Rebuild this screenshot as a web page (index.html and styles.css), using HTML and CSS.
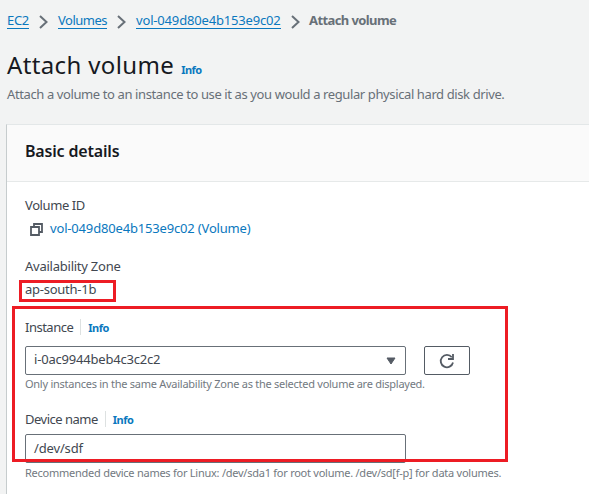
FILE: index.html
```html
<!DOCTYPE html>
<html lang="en">
<head>
<meta charset="utf-8">
<title>Attach volume</title>
<link rel="stylesheet" href="styles.css">
</head>
<body>
<nav class="breadcrumbs">
  <a class="crumb crumb-root" href="#">EC2</a>
  <svg class="chevron" viewBox="0 0 9 14"><path d="M1 1l6.500 6L1 13"/></svg>
  <a class="crumb crumb-list" href="#">Volumes</a>
  <svg class="chevron" viewBox="0 0 9 14"><path d="M1 1l6.500 6L1 13"/></svg>
  <a class="crumb crumb-volume" href="#">vol-049d80e4b153e9c02</a>
  <svg class="chevron" viewBox="0 0 9 14"><path d="M1 1l6.500 6L1 13"/></svg>
  <span class="crumb-current">Attach volume</span>
</nav>
<header class="page-header">
  <div class="title-row"><h1>Attach volume</h1><a class="info" href="#">Info</a></div>
  <p class="description">Attach a volume to an instance to use it as you would a regular physical hard disk drive.</p>
</header>
<main class="card">
  <div class="card-header"><h2>Basic details</h2></div>
  <div class="card-body">
    <section class="detail">
      <div class="label label-id">Volume ID</div>
      <div class="value">
        <svg class="copy" viewBox="0 0 13 13"><path d="M1 4h8v8H1zM4 4V1h8v8H9"/></svg>
        <a class="volume-link" href="#">vol-049d80e4b153e9c02 (Volume)</a>
      </div>
    </section>
    <section class="detail">
      <div class="label label-zone">Availability Zone</div>
      <div class="zone">ap-south-1b</div>
    </section>
    <section class="field">
      <div class="field-label"><label class="label">Instance</label><a class="info info-divided" href="#">Info</a></div>
      <div class="control-row">
        <div class="control select"><span class="selected">i-0ac9944beb4c3c2c2</span><svg class="caret" viewBox="0 0 10 8"><path d="M1 1h8L5 7z"/></svg></div>
        <button class="refresh" aria-label="Refresh"><svg viewBox="0 0 16 16"><path d="M14 9.500A6.200 6.200 0 1 1 12.800 4.200"/><path d="M14 1v5H9"/></svg></button>
      </div>
      <p class="hint hint-instance">Only instances in the same Availability Zone as the selected volume are displayed.</p>
    </section>
    <section class="field">
      <div class="field-label field-label-compact"><label class="label">Device name</label><a class="info info-divided" href="#">Info</a></div>
      <div class="control input">/dev/sdf</div>
      <p class="hint hint-device">Recommended device names for Linux: /dev/sda1 for root volume. /dev/sd[f-p] for data volumes.</p>
    </section>
  </div>
</main>
<div class="mark mark-zone"></div>
<div class="mark mark-fields"></div>
</body>
</html>
```
FILE: styles.css
```css
* { box-sizing: border-box; }
html, body { height: 100%; }
body {
  margin: 0;
  overflow: hidden;
  background: #f2f3f3;
  color: #414750;
  font: 13px/20px "Noto Sans", sans-serif;
}
a { color: #0a78be; text-decoration: none; }
h1, h2, p { margin: 0; }

.breadcrumbs { display: flex; align-items: flex-start; padding: 10px 0 0 7px; height: 48px; white-space: nowrap; }
.crumb { height: 19px; border-bottom: 1px solid #0a78be; }
.crumb-root { width: 22px; letter-spacing: -.3px; }
.crumb-list { width: 49px; letter-spacing: -.5px; }
.crumb-volume { width: 145px; letter-spacing: -.17px; }
.chevron { width: 9px; height: 14px; margin: 5px 10px 0; fill: none; stroke: #687078; stroke-width: 2; }
.crumb-current { margin-left: -1px; color: #687078; font-weight: 700; letter-spacing: -.6px; }

.page-header { height: 76px; padding-left: 7px; }
.title-row { display: flex; align-items: baseline; height: 36px; }
h1 { color: #16191f; font-size: 24px; font-weight: 400; line-height: 34px; letter-spacing: .36px; }
.info { font-size: 11px; font-weight: 700; letter-spacing: -.5px; }
.title-row .info { margin-left: 7px; }
.description { color: #687078; letter-spacing: -.39px; white-space: nowrap; }

.card { height: 371px; margin-left: 6px; border-top: 1px solid #e3e7e8; border-left: 1px solid #c6cccd; background: #fff; }
.card-header { height: 57px; padding: 16px 18px; border-bottom: 1px solid #e6e9e9; background: #fafafa; }
h2 { color: #16191f; font-size: 16px; font-weight: 600; line-height: 21px; letter-spacing: -.18px; }
.card-body { padding: 13px 18px; }
.detail { height: 61px; }
.label { letter-spacing: -.5px; }
.label-id { letter-spacing: -.4px; }
.label-zone { letter-spacing: -.24px; }
.value { display: flex; align-items: center; height: 26px; padding-left: 5px; }
.copy { width: 13px; height: 13px; margin: 3px 7px 0 0; fill: none; stroke: #545b64; stroke-width: 1.8; }
.volume-link { letter-spacing: -.17px; }
.zone { padding-top: 3px; letter-spacing: -.25px; }

.field { height: 92px; }
.field-label { display: flex; align-items: flex-start; height: 29px; }
.field-label-compact { height: 25px; }
.info-divided { height: 16px; margin: 2px 0 0 7px; padding-left: 7px; border-left: 1px solid #dde1e1; line-height: 17px; }
.control-row { display: flex; gap: 18px; }
.control { width: 381px; height: 29px; padding: 0 9px 0 8px; border: 1px solid #687078; border-radius: 2px; }
.select { display: flex; align-items: center; justify-content: space-between; letter-spacing: -.2px; }
.selected { padding-bottom: 3px; }
.caret { width: 10px; height: 8px; fill: #545b64; stroke: #545b64; stroke-width: 1; stroke-linejoin: round; }
.input { letter-spacing: -.15px; line-height: 27px; }
.refresh { display: flex; align-items: center; justify-content: center; width: 46px; height: 29px; padding: 0; border: 1px solid #545b64; border-radius: 2px; background: #fff; }
.refresh svg { width: 16px; height: 16px; fill: none; stroke: #545b64; stroke-width: 1.8; }
.hint { color: #727981; font-size: 11px; line-height: 18px; letter-spacing: -.25px; white-space: nowrap; }
.hint-instance { letter-spacing: -.26px; }
.hint-device { padding-top: 1px; }

.mark { position: absolute; border: 3px solid #ed1c24; }
.mark-zone { left: 19px; top: 280px; width: 97px; height: 22px; }
.mark-fields { left: 12px; top: 306px; width: 496px; height: 156px; }
```
